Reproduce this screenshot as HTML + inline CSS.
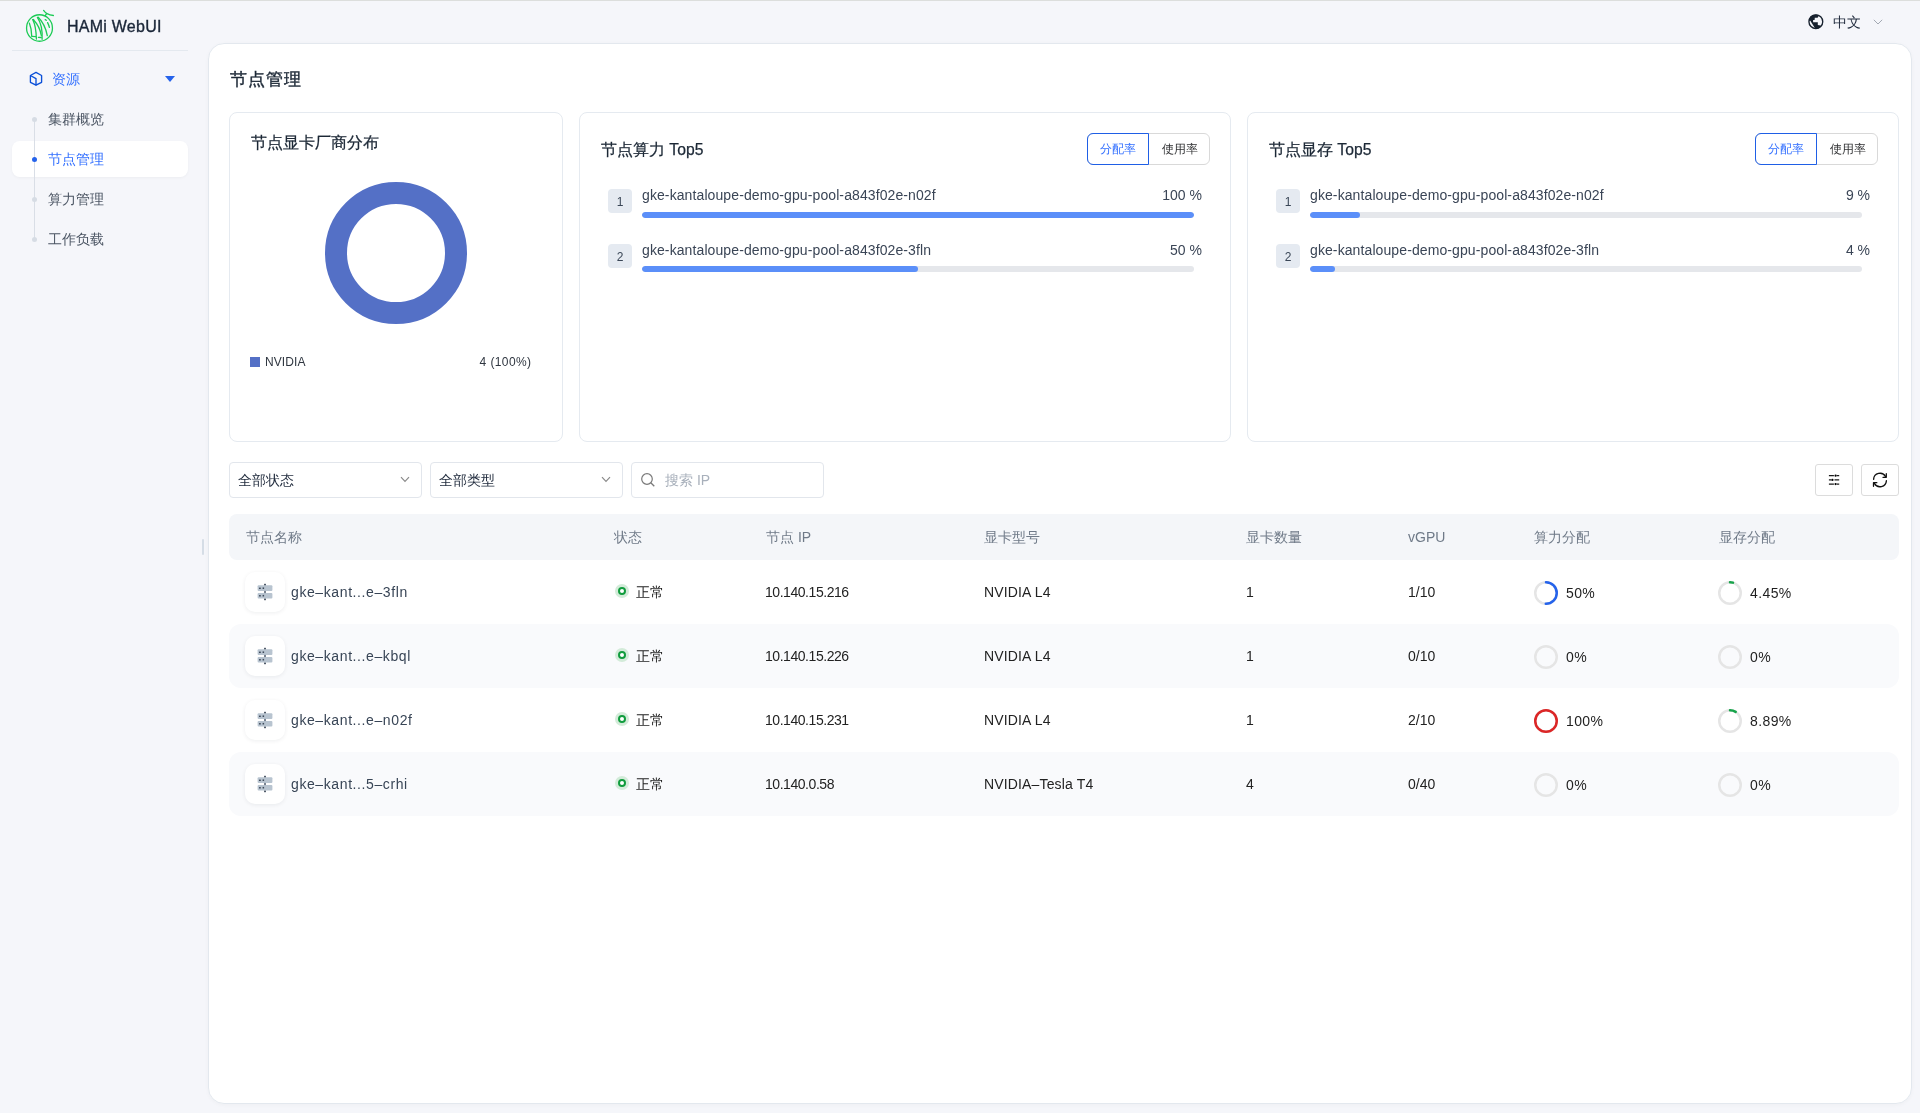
<!DOCTYPE html>
<html><head><meta charset="utf-8">
<style>
*{box-sizing:border-box;margin:0;padding:0}
html,body{width:1920px;height:1113px;overflow:hidden}
body{will-change:transform;background:#f5f6fa;font-family:"Liberation Sans",sans-serif;color:#1e293b;position:relative}
.abs{position:absolute}
.topline{left:0;top:0;width:1920px;height:1px;background:#dcdedc}
.brand{left:67px;top:17.5px;font-size:16px;font-weight:400;color:#1a2638;letter-spacing:0.25px;-webkit-text-stroke:0.35px #1a2638}
.divider{left:12px;top:50px;width:176px;height:1px;background:#e4e9ef}
.menu-root{left:52px;top:70px;font-size:14px;color:#3370ff;line-height:18px}
.tl{left:34px;top:119px;width:1px;height:120px;background:#d9dee6}
.dot{width:5px;height:5px;border-radius:50%;background:#d6dce4}
.active-bg{left:12px;top:141px;width:176px;height:36px;background:#fff;border-radius:8px;box-shadow:0 1px 3px rgba(0,0,0,0.04)}
.mi{left:48px;font-size:14px;color:#4b5563;line-height:18px}
.panel{left:208px;top:43px;width:1704px;height:1061px;background:#fff;border:1px solid #e3e8ee;border-radius:16px;box-shadow:0 1px 4px rgba(0,0,0,0.03)}
.title{left:230px;top:68.5px;font-size:16.8px;letter-spacing:1px;font-weight:400;color:#1c2836;line-height:22px;-webkit-text-stroke:0.4px #1c2836}
.card{top:112px;height:330px;background:#fff;border:1px solid #e5eaf0;border-radius:8px}
.ctitle{font-size:15.7px;font-weight:400;color:#1c2836;line-height:20px;-webkit-text-stroke:0.25px #1c2836}
.seg{height:32px;border:1px solid #d9d9d9;border-radius:6px;font-size:12px}
.seg div{position:absolute;top:-1px;height:32px;line-height:30px;text-align:center;color:#303133}
.seg .on{left:-1px;width:62px;border:1px solid #1f5fe6;color:#3370ff;border-radius:6px 0 0 6px}
.seg .off{left:61px;width:61px;line-height:32px}
.rank{width:24px;height:24px;background:#e5eaf1;border-radius:4px;font-size:12px;color:#3a4656;text-align:center;line-height:26px}
.pname{font-size:14px;color:#3a4556;line-height:16px;letter-spacing:0.1px}
.pval{font-size:14px;color:#3a4556;line-height:16px;text-align:right}
.bar{height:6px;background:#e5e7eb;border-radius:3px;overflow:hidden}
.bar i{display:block;height:100%;background:#5b8ff9;border-radius:3px}
.sel{top:462px;height:36px;border:1px solid #e2e6ec;border-radius:4px;font-size:14px;color:#1e293b;line-height:34px;padding-left:8px}
.ibtn{top:464px;width:38px;height:32px;border:1px solid #dcdcdc;border-radius:3px;background:#fff}
.thead{left:229px;top:514px;width:1670px;height:46px;background:#f4f6f9;border-radius:8px}
.th{top:528px;font-size:14px;color:#6f7a88;line-height:18px}
.row{left:229px;width:1670px;height:64px;border-radius:12px}
.row.alt{background:#f9fafc}
.td{font-size:14px;color:#222;line-height:18px}
.nicon{width:40px;height:40px;background:#fff;border-radius:10px;box-shadow:0 1px 4px rgba(15,23,42,0.07)}
.nm{color:#384556;letter-spacing:0.6px}
.ip{letter-spacing:-0.45px}
.md{letter-spacing:0.15px}
.pc{letter-spacing:0.4px;color:#1f1f1f}

.sdot{width:14px;height:14px;border-radius:50%;background:#d3ebd9}
.sdot:after{content:"";position:absolute;left:3px;top:3px;width:8px;height:8px;border-radius:50%;box-sizing:border-box;border:2px solid #109c3d;background:#fff}
</style></head>
<body>
<svg width="0" height="0" style="position:absolute"><defs>
<symbol id="srv" viewBox="0 0 16 18">
<rect x="0.6" y="2.3" width="14.8" height="5.6" rx="1" fill="#b8c4d0"/>
<rect x="0.6" y="10.1" width="14.8" height="5.5" rx="1" fill="#b8c4d0"/>
<rect x="7.1" y="0.8" width="1.8" height="1.5" fill="#3f4b5b"/>
<rect x="7.1" y="7.9" width="1.8" height="2.2" fill="#6b7685"/>
<rect x="7.1" y="15.6" width="1.8" height="1.6" fill="#3f4b5b"/>
<rect x="2" y="4.6" width="1.8" height="1.4" fill="#3f4b5b"/>
<rect x="5.6" y="4.4" width="1.5" height="1.6" fill="#3f4b5b"/>
<rect x="2" y="12.1" width="1.8" height="1.4" fill="#3f4b5b"/>
<rect x="5.6" y="11.9" width="1.5" height="1.6" fill="#3f4b5b"/>
</symbol></defs></svg>
<div class="abs topline"></div>
<!-- logo -->
<svg class="abs" style="left:22px;top:6px" width="36" height="40" viewBox="0 0 36 40">
 <g fill="none" stroke="#1ccb55" stroke-width="1.3" stroke-linecap="round">
  <ellipse cx="17.5" cy="22" rx="12.95" ry="13.25"/>
  <path d="M21.6 4.4 C22.8 6 23.8 7 25 7.6 C27 8.6 29 9.2 31.4 9.5"/>
  <path d="M24.6 7.6 L23.4 9.4"/>
  <path d="M7.4 17.2 C8.8 20.5 9.6 25 9.7 30"/>
  <path d="M9.9 30.3 L13.6 30.7"/>
  <path d="M10.8 13.6 C13 18 14.2 26 14.4 33"/>
  <path d="M11.2 13.5 C15 17.5 18.3 23 19.3 29.5"/>
  <path d="M15.4 11.4 C18.5 16 20.6 24 20.1 33.3"/>
  <path d="M16.2 11.3 C20 15 23.8 22 25.3 29.6"/>
  <path d="M16.4 31.3 L19.2 31.5"/>
  <path d="M23.2 13.6 L24.3 14.3"/>
  <path d="M25.6 16.6 C26.3 18 27 19.6 27.4 21.3"/>
 </g>
 <g fill="#1ccb55"><path d="M10.3 13.3 C11 12.8 11.8 13 12.4 13.8 L11.6 15.4 Z"/><path d="M15 11.2 C15.8 10.8 16.6 11 17.2 11.6 L16.2 13 Z"/></g>
</svg>
<div class="abs brand">HAMi WebUI</div>
<div class="abs divider"></div>
<!-- menu root -->
<svg class="abs" style="left:28px;top:71px" width="16" height="16" viewBox="0 0 16 16"><g fill="none" stroke="#0b50d8" stroke-width="1.35" stroke-linejoin="round"><path d="M8 1.4 L13.6 4.5 V11.3 L8 14.2 L2.4 11.3 V4.5 Z"/><path d="M2.4 4.5 L8 7.6 V14.2"/></g></svg>
<div class="abs menu-root">资源</div>
<svg class="abs" style="left:164px;top:75px" width="12" height="8" viewBox="0 0 12 8"><path d="M1 1 H11 L6 7 Z" fill="#2563eb"/></svg>
<div class="abs active-bg"></div>
<div class="abs tl"></div>
<div class="abs dot" style="left:32px;top:116.5px"></div>
<div class="abs dot" style="left:32px;top:156.5px;background:#2563eb"></div>
<div class="abs dot" style="left:32px;top:196.5px"></div>
<div class="abs dot" style="left:32px;top:236.5px"></div>
<div class="abs mi" style="top:110px">集群概览</div>
<div class="abs mi" style="top:150px;color:#3370ff">节点管理</div>
<div class="abs mi" style="top:190px">算力管理</div>
<div class="abs mi" style="top:230px">工作负载</div>
<div class="abs" style="left:202px;top:539px;width:2px;height:16px;background:#d5dde6;border-radius:1px"></div>

<!-- language -->
<svg class="abs" style="left:1804px;top:10px" width="24" height="24" viewBox="0 0 24 24"><defs><clipPath id="gc"><circle cx="11.85" cy="11.7" r="7.2"/></clipPath></defs><circle cx="11.85" cy="11.7" r="6.9" fill="none" stroke="#17212e" stroke-width="1.35"/><path clip-path="url(#gc)" fill="#17212e" d="M4 3 H14.6 V6 L13.6 7.7 L10.8 7.8 L10.6 9.9 L9.1 10.1 L9.1 12.2 L13.8 12.3 L13.8 15 L16.5 15.4 L20 20 L11.4 20 L11.2 18.5 L6.3 10.8 L4 10.6 Z"/></svg>
<div class="abs" style="left:1833px;top:13px;font-size:14px;font-weight:500;color:#1e293b;line-height:18px">中文</div>
<svg class="abs" style="left:1873px;top:19px" width="10" height="6" viewBox="0 0 10 6"><path d="M0.8 0.8 L5 5 L9.2 0.8" fill="none" stroke="#a3a9b3" stroke-width="1"/></svg>

<div class="abs panel"></div>
<div class="abs title">节点管理</div>

<!-- card 1 -->
<div class="abs card" style="left:229px;width:334px"></div>
<div class="abs ctitle" style="left:251px;top:133px">节点显卡厂商分布</div>
<svg class="abs" style="left:324px;top:181px" width="144" height="144" viewBox="0 0 144 144"><circle cx="72" cy="72" r="60" fill="none" stroke="#5470c6" stroke-width="22"/></svg>
<div class="abs" style="left:250px;top:357px;width:10px;height:10px;background:#5470c6"></div>
<div class="abs" style="left:265px;top:355px;font-size:12px;color:#2f3640;line-height:15px;letter-spacing:0.1px">NVIDIA</div>
<div class="abs" style="left:430px;width:101.5px;top:355px;font-size:12px;color:#2f3640;line-height:15px;text-align:right;letter-spacing:0.4px">4 (100%)</div>

<!-- card 2 -->
<div class="abs card" style="left:579px;width:652px"></div>
<div class="abs ctitle" style="left:601px;top:140px">节点算力 Top5</div>
<div class="abs seg" style="left:1087px;top:133px;width:123px"><div class="on">分配率</div><div class="off">使用率</div></div>
<div class="abs rank" style="left:608px;top:189px">1</div>
<div class="abs pname" style="left:642px;top:187px">gke-kantaloupe-demo-gpu-pool-a843f02e-n02f</div>
<div class="abs pval" style="left:1100px;width:102px;top:187px">100 %</div>
<div class="abs bar" style="left:642px;top:212px;width:552px"><i style="width:100%"></i></div>
<div class="abs rank" style="left:608px;top:244px">2</div>
<div class="abs pname" style="left:642px;top:242px">gke-kantaloupe-demo-gpu-pool-a843f02e-3fln</div>
<div class="abs pval" style="left:1100px;width:102px;top:242px">50 %</div>
<div class="abs bar" style="left:642px;top:266px;width:552px"><i style="width:50%"></i></div>

<!-- card 3 -->
<div class="abs card" style="left:1247px;width:652px"></div>
<div class="abs ctitle" style="left:1269px;top:140px">节点显存 Top5</div>
<div class="abs seg" style="left:1755px;top:133px;width:123px"><div class="on">分配率</div><div class="off">使用率</div></div>
<div class="abs rank" style="left:1276px;top:189px">1</div>
<div class="abs pname" style="left:1310px;top:187px">gke-kantaloupe-demo-gpu-pool-a843f02e-n02f</div>
<div class="abs pval" style="left:1768px;width:102px;top:187px">9 %</div>
<div class="abs bar" style="left:1310px;top:212px;width:552px"><i style="width:9%"></i></div>
<div class="abs rank" style="left:1276px;top:244px">2</div>
<div class="abs pname" style="left:1310px;top:242px">gke-kantaloupe-demo-gpu-pool-a843f02e-3fln</div>
<div class="abs pval" style="left:1768px;width:102px;top:242px">4 %</div>
<div class="abs bar" style="left:1310px;top:266px;width:552px"><i style="width:4.5%"></i></div>

<!-- filters -->
<div class="abs sel" style="left:229px;width:193px">全部状态</div>
<div class="abs sel" style="left:430px;width:193px">全部类型</div>
<div class="abs sel" style="left:631px;width:193px;color:#a8b0bb;padding-left:33px">搜索 IP</div>
<svg class="abs" style="left:400px;top:476px" width="10" height="7" viewBox="0 0 10 7"><path d="M1 1.2 L5 5.3 L9 1.2" fill="none" stroke="#8a8a8a" stroke-width="1.2"/></svg>
<svg class="abs" style="left:601px;top:476px" width="10" height="7" viewBox="0 0 10 7"><path d="M1 1.2 L5 5.3 L9 1.2" fill="none" stroke="#8a8a8a" stroke-width="1.2"/></svg>
<svg class="abs" style="left:640px;top:472px" width="16" height="16" viewBox="0 0 16 16"><circle cx="7" cy="7" r="5.3" fill="none" stroke="#7a7a7a" stroke-width="1.2"/><path d="M10.8 10.8 L14.3 14.3" stroke="#7a7a7a" stroke-width="1.3"/></svg>
<div class="abs ibtn" style="left:1815px"></div>
<div class="abs ibtn" style="left:1861px"></div>
<svg class="abs" style="left:1827px;top:473px" width="14" height="14" viewBox="0 0 14 14"><g stroke="#1a1a1a" stroke-width="1.3"><path d="M1.9 2.7 H6.9 M9.9 2.7 H12.2 M1.9 6.9 H4.2 M7.5 6.9 H12.2 M1.9 11.1 H6.9 M9.9 11.1 H12.2"/></g><g fill="#000"><circle cx="8.6" cy="2.7" r="1.15"/><circle cx="5.4" cy="6.9" r="1.15"/><circle cx="8.6" cy="11.1" r="1.15"/></g></svg>
<svg class="abs" style="left:1871px;top:471px" width="18" height="18" viewBox="0 0 18 18"><g fill="none" stroke="#111" stroke-width="1.3" stroke-linecap="round" stroke-linejoin="round"><path d="M2.6 8.4 A6.4 6.4 0 0 1 14.6 5.6"/><path d="M15.4 9.6 A6.4 6.4 0 0 1 3.4 12.4"/><path d="M15.3 2.7 V6.3 H12"/><path d="M2.5 15.3 V11.7 H5.8"/></g></svg>

<!-- table -->
<div class="abs thead"></div>
<div class="abs th" style="left:246px">节点名称</div>
<div class="abs th" style="left:614px">状态</div>
<div class="abs th" style="left:766px">节点 IP</div>
<div class="abs th" style="left:984px">显卡型号</div>
<div class="abs th" style="left:1246px">显卡数量</div>
<div class="abs th" style="left:1408px">vGPU</div>
<div class="abs th" style="left:1534px">算力分配</div>
<div class="abs th" style="left:1719px">显存分配</div>

<div class="abs row" style="top:560px"></div>
<div class="abs row alt" style="top:624px"></div>
<div class="abs row" style="top:688px"></div>
<div class="abs row alt" style="top:752px"></div>

<div class="abs nicon" style="left:245px;top:572px"></div>
<svg class="abs ricon" style="left:257px;top:583px" width="16" height="18" viewBox="0 0 16 18"><use href="#srv"/></svg>
<div class="abs td nm" style="left:291px;top:583px">gke–kant...e–3fln</div>
<div class="abs sdot" style="left:615px;top:584px"></div>
<div class="abs td st" style="left:636px;top:583px">正常</div>
<div class="abs td num ip" style="left:765px;top:583px">10.140.15.216</div>
<div class="abs td num md" style="left:984px;top:583px">NVIDIA L4</div>
<div class="abs td num" style="left:1246px;top:583px">1</div>
<div class="abs td num" style="left:1408px;top:583px">1/10</div>
<svg class="abs" style="left:1534px;top:581px" width="24" height="24" viewBox="0 0 24 24"><circle cx="12" cy="12" r="10.75" fill="none" stroke="#e5e5e5" stroke-width="2.5"/><circle cx="12" cy="12" r="10.75" fill="none" stroke="#2563eb" stroke-width="2.5" stroke-linecap="round" stroke-dasharray="33.77 67.54" transform="rotate(-90 12 12)"/></svg>
<div class="abs td num pc" style="left:1566px;top:584px">50%</div>
<svg class="abs" style="left:1718px;top:581px" width="24" height="24" viewBox="0 0 24 24"><circle cx="12" cy="12" r="10.75" fill="none" stroke="#e5e5e5" stroke-width="2.5"/><circle cx="12" cy="12" r="10.75" fill="none" stroke="#16a34a" stroke-width="2.5" stroke-linecap="round" stroke-dasharray="3.01 67.54" transform="rotate(-90 12 12)"/></svg>
<div class="abs td num pc" style="left:1750px;top:584px">4.45%</div>
<div class="abs nicon" style="left:245px;top:636px"></div>
<svg class="abs ricon" style="left:257px;top:647px" width="16" height="18" viewBox="0 0 16 18"><use href="#srv"/></svg>
<div class="abs td nm" style="left:291px;top:647px">gke–kant...e–kbql</div>
<div class="abs sdot" style="left:615px;top:648px"></div>
<div class="abs td st" style="left:636px;top:647px">正常</div>
<div class="abs td num ip" style="left:765px;top:647px">10.140.15.226</div>
<div class="abs td num md" style="left:984px;top:647px">NVIDIA L4</div>
<div class="abs td num" style="left:1246px;top:647px">1</div>
<div class="abs td num" style="left:1408px;top:647px">0/10</div>
<svg class="abs" style="left:1534px;top:645px" width="24" height="24" viewBox="0 0 24 24"><circle cx="12" cy="12" r="10.75" fill="none" stroke="#e5e5e5" stroke-width="2.5"/></svg>
<div class="abs td num pc" style="left:1566px;top:648px">0%</div>
<svg class="abs" style="left:1718px;top:645px" width="24" height="24" viewBox="0 0 24 24"><circle cx="12" cy="12" r="10.75" fill="none" stroke="#e5e5e5" stroke-width="2.5"/></svg>
<div class="abs td num pc" style="left:1750px;top:648px">0%</div>
<div class="abs nicon" style="left:245px;top:700px"></div>
<svg class="abs ricon" style="left:257px;top:711px" width="16" height="18" viewBox="0 0 16 18"><use href="#srv"/></svg>
<div class="abs td nm" style="left:291px;top:711px">gke–kant...e–n02f</div>
<div class="abs sdot" style="left:615px;top:712px"></div>
<div class="abs td st" style="left:636px;top:711px">正常</div>
<div class="abs td num ip" style="left:765px;top:711px">10.140.15.231</div>
<div class="abs td num md" style="left:984px;top:711px">NVIDIA L4</div>
<div class="abs td num" style="left:1246px;top:711px">1</div>
<div class="abs td num" style="left:1408px;top:711px">2/10</div>
<svg class="abs" style="left:1534px;top:709px" width="24" height="24" viewBox="0 0 24 24"><circle cx="12" cy="12" r="10.75" fill="none" stroke="#e5e5e5" stroke-width="2.5"/><circle cx="12" cy="12" r="10.75" fill="none" stroke="#dc2626" stroke-width="2.5" stroke-linecap="round" stroke-dasharray="67.54 67.54" transform="rotate(-90 12 12)"/></svg>
<div class="abs td num pc" style="left:1566px;top:712px">100%</div>
<svg class="abs" style="left:1718px;top:709px" width="24" height="24" viewBox="0 0 24 24"><circle cx="12" cy="12" r="10.75" fill="none" stroke="#e5e5e5" stroke-width="2.5"/><circle cx="12" cy="12" r="10.75" fill="none" stroke="#16a34a" stroke-width="2.5" stroke-linecap="round" stroke-dasharray="6.00 67.54" transform="rotate(-90 12 12)"/></svg>
<div class="abs td num pc" style="left:1750px;top:712px">8.89%</div>
<div class="abs nicon" style="left:245px;top:764px"></div>
<svg class="abs ricon" style="left:257px;top:775px" width="16" height="18" viewBox="0 0 16 18"><use href="#srv"/></svg>
<div class="abs td nm" style="left:291px;top:775px">gke–kant...5–crhi</div>
<div class="abs sdot" style="left:615px;top:776px"></div>
<div class="abs td st" style="left:636px;top:775px">正常</div>
<div class="abs td num ip" style="left:765px;top:775px">10.140.0.58</div>
<div class="abs td num md" style="left:984px;top:775px">NVIDIA–Tesla T4</div>
<div class="abs td num" style="left:1246px;top:775px">4</div>
<div class="abs td num" style="left:1408px;top:775px">0/40</div>
<svg class="abs" style="left:1534px;top:773px" width="24" height="24" viewBox="0 0 24 24"><circle cx="12" cy="12" r="10.75" fill="none" stroke="#e5e5e5" stroke-width="2.5"/></svg>
<div class="abs td num pc" style="left:1566px;top:776px">0%</div>
<svg class="abs" style="left:1718px;top:773px" width="24" height="24" viewBox="0 0 24 24"><circle cx="12" cy="12" r="10.75" fill="none" stroke="#e5e5e5" stroke-width="2.5"/></svg>
<div class="abs td num pc" style="left:1750px;top:776px">0%</div>
</body></html>
